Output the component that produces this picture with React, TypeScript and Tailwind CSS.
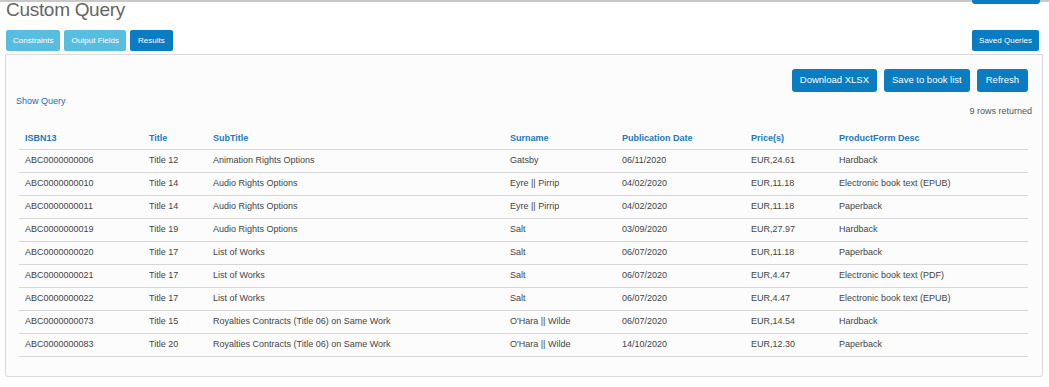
import React from "react";

const ROWS = [
  ["ABC0000000006", "Title 12", "Animation Rights Options", "Gatsby", "06/11/2020", "EUR,24.61", "Hardback"],
  ["ABC0000000010", "Title 14", "Audio Rights Options", "Eyre || Pirrip", "04/02/2020", "EUR,11.18", "Electronic book text (EPUB)"],
  ["ABC0000000011", "Title 14", "Audio Rights Options", "Eyre || Pirrip", "04/02/2020", "EUR,11.18", "Paperback"],
  ["ABC0000000019", "Title 19", "Audio Rights Options", "Salt", "03/09/2020", "EUR,27.97", "Hardback"],
  ["ABC0000000020", "Title 17", "List of Works", "Salt", "06/07/2020", "EUR,11.18", "Paperback"],
  ["ABC0000000021", "Title 17", "List of Works", "Salt", "06/07/2020", "EUR,4.47", "Electronic book text (PDF)"],
  ["ABC0000000022", "Title 17", "List of Works", "Salt", "06/07/2020", "EUR,4.47", "Electronic book text (EPUB)"],
  ["ABC0000000073", "Title 15", "Royalties Contracts (Title 06) on Same Work", "O'Hara || Wilde", "06/07/2020", "EUR,14.54", "Hardback"],
  ["ABC0000000083", "Title 20", "Royalties Contracts (Title 06) on Same Work", "O'Hara || Wilde", "14/10/2020", "EUR,12.30", "Paperback"],
];

const HEADERS = ["ISBN13", "Title", "SubTitle", "Surname", "Publication Date", "Price(s)", "ProductForm Desc"];
const WIDTHS = [124, 64, 297, 112, 129, 88, 195];

export default function App() {
  return (
    <div className="relative h-[387px] w-[1049px] overflow-hidden bg-white font-['Liberation_Sans',Arial,sans-serif] text-[#333]">
      <div className="h-[2px] w-full bg-[#c8c8c8]" />
      <div className="absolute right-[9px] top-0 h-[4px] w-[68px] rounded-b-[3px] bg-[#0a7cc2]" />
      <h1 className="ml-[6px] mt-[-2px] text-[19px] leading-[20px] tracking-[-0.3px] text-[#666]">Custom Query</h1>
      <div className="mx-[6px] mt-[10px] flex items-center">
        <div className="flex gap-[4px]">
          <button className="h-[21px] rounded-[2px] bg-[#59bde0] px-[7px] text-[8px] text-white">Constraints</button>
          <button className="h-[21px] rounded-[2px] bg-[#59bde0] px-[7px] text-[8px] text-white">Output Fields</button>
          <button className="h-[21px] rounded-[2px] bg-[#0a7cc2] px-[8px] text-[8px] text-white">Results</button>
        </div>
        <button className="ml-auto mr-[4px] h-[21px] rounded-[2px] bg-[#0a7cc2] px-[7px] text-[8px] text-white">Saved Queries</button>
      </div>
      <div className="ml-[5px] mt-[3px] h-[323px] w-[1038px] rounded-b-[3px] border border-[#d9d9d9] bg-[#fcfcfc] pl-[13px] pr-[14px]">
        <div className="mt-[14px] flex justify-end gap-[7px]">
          <button className="h-[23px] rounded-[3px] bg-[#0a7cc2] px-[8px] text-[9.5px] text-white">Download XLSX</button>
          <button className="h-[23px] rounded-[3px] bg-[#0a7cc2] px-[8px] text-[9.5px] text-white">Save to book list</button>
          <button className="h-[23px] rounded-[3px] bg-[#0a7cc2] px-[9px] text-[9.5px] text-white">Refresh</button>
        </div>
        <div className="flex items-start">
          <a className="ml-[-3px] mt-[4px] text-[9px] leading-[11px] text-[#1a6fb5]">Show Query</a>
          <span className="ml-auto mr-[-4px] mt-[14px] text-[9px] leading-[11px] text-[#555]">9 rows returned</span>
        </div>
        <table className="mt-[9px] table-fixed border-collapse text-[9px]">
          <colgroup>
            {WIDTHS.map((w, i) => (
              <col key={i} style={{ width: w }} />
            ))}
          </colgroup>
          <thead>
            <tr className="border-b border-[#d6d6d6]">
              {HEADERS.map((h) => (
                <th key={h} className="h-[23px] px-[6px] pt-[2px] text-left font-bold text-[#1a78c2]">
                  {h}
                </th>
              ))}
            </tr>
          </thead>
          <tbody>
            {ROWS.map((r, i) => (
              <tr key={i} className="border-b border-[#d6d6d6]">
                {r.map((c, j) => (
                  <td key={j} className="h-[23px] whitespace-nowrap px-[6px] text-[#444]">
                    {c}
                  </td>
                ))}
              </tr>
            ))}
          </tbody>
        </table>
      </div>
    </div>
  );
}
